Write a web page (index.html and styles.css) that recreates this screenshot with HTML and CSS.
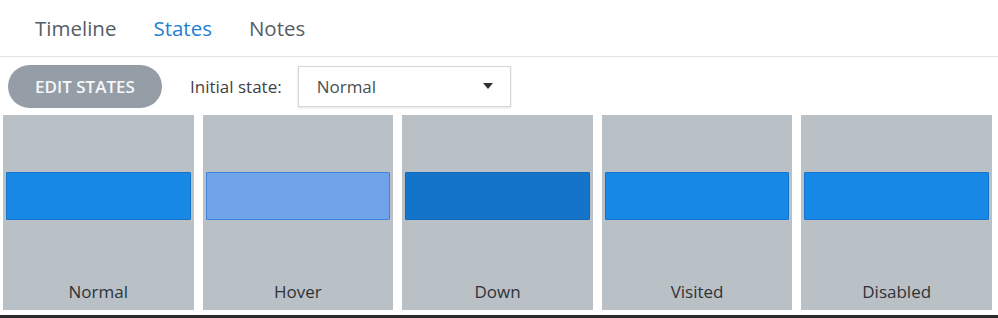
FILE: index.html
```html
<!DOCTYPE html>
<html lang="en">
<head>
    <meta charset="UTF-8">
    <title>States</title>
    <link rel="stylesheet" href="styles.css">
</head>
<body>
<div class="tabs">
    <span class="tab">Timeline</span>
    <span class="tab active">States</span>
    <span class="tab">Notes</span>
</div>

<div class="toolbar">
    <button class="edit-btn">EDIT STATES</button>
    <span class="label">Initial state:</span>
    <div class="select">
        <span>Normal</span>
        <span class="caret"></span>
    </div>
</div>

<div class="states">
    <div class="state">
        <div class="bar normal"></div>
        <p class="state-name">Normal</p>
    </div>
    <div class="state">
        <div class="bar hover"></div>
        <p class="state-name">Hover</p>
    </div>
    <div class="state">
        <div class="bar down"></div>
        <p class="state-name">Down</p>
    </div>
    <div class="state">
        <div class="bar normal"></div>
        <p class="state-name">Visited</p>
    </div>
    <div class="state">
        <div class="bar normal"></div>
        <p class="state-name">Disabled</p>
    </div>
</div>

<div class="bottom-edge"></div>
</body>
</html>
```

FILE: styles.css
```css
body {
    margin: 0;
    font-family: "Open Sans", "Noto Sans", sans-serif;
    background-color: #fff;
    width: 998px;
    height: 318px;
    overflow: hidden;
}

/* tabs */
.tabs {
    display: flex;
    gap: 37px;
    height: 56px;
    padding-left: 35px;
    padding-right: 1px;
    border-bottom: 1px solid #dfe5ea;
    box-sizing: content-box;
}

.tab {
    font-size: 20.5px;
    line-height: 28px;
    padding-top: 14px;
    color: #565d64;
}

.tab.active {
    color: #1f80d2;
}

/* toolbar */
.toolbar {
    display: flex;
    align-items: center;
    height: 58px;
    padding-left: 8px;
}

.edit-btn {
    width: 154px;
    height: 43px;
    border: none;
    border-radius: 22px;
    background-color: #959ea6;
    color: #f5f7f9;
    font-family: inherit;
    font-size: 17px;
    font-weight: 600;
    padding: 0;
    margin-right: 28px;
}

.label {
    font-size: 17px;
    color: #3d4246;
    margin-right: 16px;
}

.select {
    width: 213px;
    height: 41px;
    box-sizing: border-box;
    border: 1px solid #d3d7db;
    box-shadow: 0 1px 2px rgba(0, 0, 0, 0.12);
    display: flex;
    align-items: center;
    justify-content: space-between;
    padding: 0 17px 0 18px;
    font-size: 17px;
    color: #4a5056;
}

.caret {
    width: 0;
    height: 0;
    border-left: 5px solid transparent;
    border-right: 5px solid transparent;
    border-top: 6px solid #2f3235;
}

/* state cards */
.states {
    display: grid;
    grid-template-columns: repeat(5, 1fr);
    gap: 9px;
    height: 195px;
    padding: 0 6px 0 3px;
}

.state {
    background-color: #b9c0c6;
    display: flex;
    flex-direction: column;
    padding-top: 57px;
}

.bar {
    height: 48px;
    margin: 0 3px;
    box-sizing: border-box;
    border: 1px solid #1474cc;
    border-radius: 1px;
}

.bar.normal {
    background-color: #1888e6;
}

.bar.hover {
    background-color: #70a3e9;
    border-color: #3d84d8;
}

.bar.down {
    background-color: #1474c9;
    border-color: #1268b9;
}

.state-name {
    margin: auto 0 0;
    padding-bottom: 7px;
    font-size: 17px;
    line-height: 23px;
    text-align: center;
    color: #2f3336;
}

.bottom-edge {
    margin-top: 5px;
    height: 3px;
    background-color: #2c2c2c;
}
```
